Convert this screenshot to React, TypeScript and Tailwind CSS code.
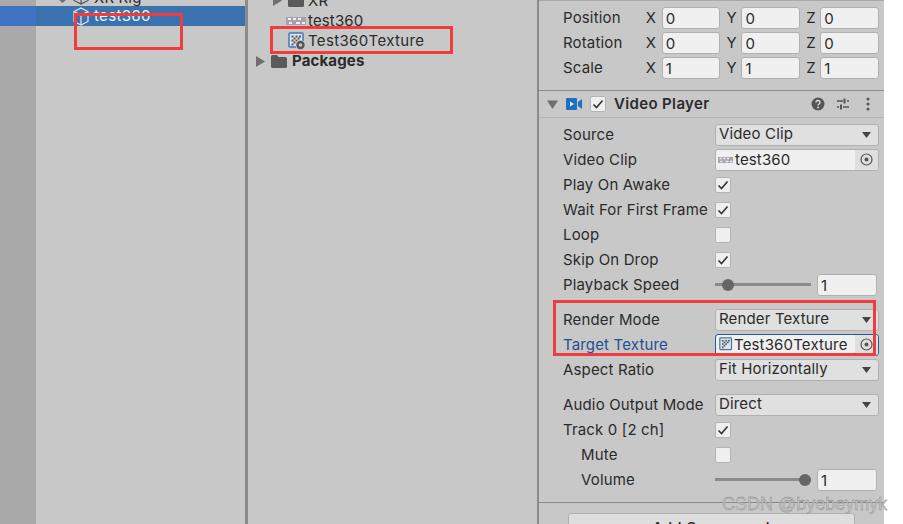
import { ReactNode } from 'react';

const GrayArrow = ({ down = false }: { down?: boolean }) => (
  <svg width="11" height="11" viewBox="0 0 11 11" className="shrink-0">
    {down ? <path d="M0 1.500h11L5.500 10z" fill="#6f6f6f" /> : <path d="M1 0l9 5.500L1 11z" fill="#6f6f6f" />}
  </svg>
);

const Folder = () => (
  <svg width="16" height="14" viewBox="0 0 16 14" className="shrink-0">
    <path d="M0 2.500Q0 1 1.500 1H6l1.500 2H14.500Q16 3 16 4.500V12.500Q16 14 14.500 14H1.500Q0 14 0 12.500z" fill="#5a5a5a" />
  </svg>
);

const Cube = ({ color }: { color: string }) => (
  <svg width="18" height="19" viewBox="0 0 18 19" fill="none" stroke={color} strokeWidth="1.200" className="shrink-0">
    <path d="M9 1l7 3.500v10L9 18l-7-3.500v-10z" />
    <path d="M2 4.500L9 8l7-3.500M9 8v10" />
  </svg>
);

const VideoThumb = ({ w = 20 }: { w?: number }) => (
  <svg width={w} height="8" viewBox="0 0 20 8" className="shrink-0">
    <rect width="20" height="8" fill="#a8a2b0" />
    <rect x="2" y="1" width="3" height="2" fill="#eee" />
    <rect x="7" y="1" width="3" height="2" fill="#eee" />
    <rect x="12" y="1" width="3" height="2" fill="#eee" />
    <rect x="3" y="5" width="3" height="2" fill="#eee" />
    <rect x="10" y="5" width="4" height="2" fill="#eee" />
    <rect x="16" y="5" width="3" height="2" fill="#eee" />
  </svg>
);

const TextureIcon = ({ size = 18, gear = true }: { size?: number; gear?: boolean }) => (
  <svg width={size} height={size} viewBox="0 0 18 18" className="shrink-0">
    <rect x="1" y="1" width="14" height="14" rx="1" fill="#dfe5ec" stroke="#3f78b0" strokeWidth="1.500" />
    <g fill="#555">
      <rect x="3.500" y="3.500" width="2" height="2" />
      <rect x="7.500" y="3.500" width="2" height="2" />
      <rect x="11" y="3.500" width="2" height="2" />
      <rect x="5.500" y="5.500" width="2" height="2" />
      <rect x="9.500" y="5.500" width="2" height="2" />
      <rect x="3.500" y="7.500" width="2" height="2" />
      <rect x="7.500" y="7.500" width="2" height="2" />
      <rect x="5.500" y="9.500" width="2" height="2" />
      <rect x="3.500" y="11.500" width="2" height="2" />
    </g>
    {gear && (
      <>
        <circle cx="12.500" cy="13" r="5" fill="#c8c8c8" />
        <circle cx="12.500" cy="13" r="3" fill="none" stroke="#555" strokeWidth="2.400" />
      </>
    )}
  </svg>
);

const Check = () => (
  <svg width="12" height="12" viewBox="0 0 12 12" fill="none" stroke="#333" strokeWidth="1.600">
    <path d="M1.500 6.500l3 3 6-7" />
  </svg>
);

const Checkbox = ({ checked = false }: { checked?: boolean }) => (
  <div className="w-4 h-4 rounded-[2px] bg-[#efefef] border border-[#b4b4b4] flex items-center justify-center">
    {checked && <Check />}
  </div>
);

const NumberField = ({ value, className }: { value: string; className: string }) => (
  <div className={`h-[22px] rounded-[3px] bg-[#f0f0f0] border border-[#b0b0b0] pl-[3px] flex items-center leading-none pt-[2px] ${className}`}>
    {value}
  </div>
);

const VectorRow = ({ label, value }: { label: string; value: string }) => (
  <div className="h-[25px] flex items-center pl-6 pr-[5px]">
    <div className="w-[83px]">{label}</div>
    <div className="w-[16px]">X</div>
    <NumberField value={value} className="w-[59px]" />
    <div className="w-[21px] pl-[6px]">Y</div>
    <NumberField value={value} className="w-[59px]" />
    <div className="w-[20px] pl-[6px]">Z</div>
    <NumberField value={value} className="w-[59px]" />
  </div>
);

const Dropdown = ({ value }: { value: string }) => (
  <div className="w-[164px] h-[22px] rounded-[3px] bg-[#e0e0e0] border border-[#b0b0b0] pl-[3px] pr-[7px] flex items-center justify-between">
    <span className="-mt-[2px]">{value}</span>
    <svg width="9" height="6" viewBox="0 0 9 6"><path d="M0 0h9L4.500 6z" fill="#444" /></svg>
  </div>
);

const ObjectField = ({ icon, value, focused = false }: { icon: ReactNode; value: string; focused?: boolean }) => (
  <div className={`w-[164px] h-[22px] rounded-[3px] bg-[#f0f0f0] border flex items-center justify-between ${focused ? 'border-[#2a5a9a]' : 'border-[#b0b0b0]'}`}>
    <div className="flex items-center pl-[2px]">
      {icon}
      <span>{value}</span>
    </div>
    <div className="w-[23px] h-full bg-[#dfdfdf] rounded-r-[3px] flex items-center justify-center">
      <svg width="13" height="13" viewBox="0 0 13 13" fill="none">
        <circle cx="6.500" cy="6.500" r="5.500" stroke="#555" strokeWidth="1.200" />
        <circle cx="6.500" cy="6.500" r="2" fill="#555" />
      </svg>
    </div>
  </div>
);

const Slider = ({ at, value }: { at: 'start' | 'end'; value: string }) => (
  <div className="flex items-center gap-[6px]">
    <div className={`w-[96px] h-[3px] bg-[#8a8a8a] flex items-center ${at === 'start' ? 'justify-start pl-[7px]' : 'justify-end'}`}>
      <div className="w-3 h-3 rounded-full bg-[#666666] shrink-0" />
    </div>
    <NumberField value={value} className="w-[60px]" />
  </div>
);

const Row = ({ label, children, indent = false, blue = false, mt = '' }: { label: string; children: ReactNode; indent?: boolean; blue?: boolean; mt?: string }) => (
  <div className={`h-[25px] flex items-center pr-[5px] ${indent ? 'pl-[42px]' : 'pl-6'} ${mt}`}>
    <div className={`whitespace-nowrap ${indent ? 'w-[134px]' : 'w-[152px]'} ${blue ? 'text-[#1f4f96]' : ''}`}>{label}</div>
    {children}
  </div>
);

export default function App() {
  return (
    <div className="relative w-[903px] h-[524px] overflow-hidden bg-white flex text-[#2b2b2b] text-[15px] tracking-[0.15px] leading-[20px] font-['Inter',sans-serif]">
      {/* hierarchy */}
      <div className="w-[36px] bg-[#a9a9a9] pt-[6px]">
        <div className="h-[20px] bg-[#3f74c4]" />
      </div>
      <div className="w-[209px] bg-[#c8c8c8]">
        <div className="h-[6px] flex items-end pl-[22px] gap-[4px]">
          <svg width="9" height="4" viewBox="0 0 9 4" className="shrink-0 mb-[3px]"><path d="M0 0h9L4.500 4z" fill="#6f6f6f" /></svg>
          <span className="ml-px mb-px"><Cube color="#555555" /></span>
          <span className="-mb-[2px] whitespace-nowrap">XR Rig</span>
        </div>
        <div className="h-[20px] bg-[#3a72b0] flex items-center pl-[36px] gap-[4px] text-[#f4f4f4]">
          <Cube color="#e8e8e8" />
          <span className="tracking-[0.35px]">test360</span>
        </div>
      </div>
      <div className="w-[3px] bg-[#8a8a8a]" />

      {/* project */}
      <div className="w-[289px] bg-[#c8c8c8]">
        <div className="h-[6px] flex items-end pl-6">
          <GrayArrow />
          <span className="ml-[5px] -mb-px"><Folder /></span>
          <span className="ml-[4px] -mb-[5px]">XR</span>
        </div>
        <div className="h-[20px] mt-[5px] flex items-center pl-[38px] gap-[2px]">
          <VideoThumb />
          <span>test360</span>
        </div>
        <div className="h-[20px] flex items-center pl-[40px] gap-[2px]">
          <TextureIcon />
          <span className="tracking-[0.35px]">Test360Texture</span>
        </div>
        <div className="h-[20px] flex items-center pl-[7px] gap-[5px] font-bold">
          <GrayArrow />
          <Folder />
          <span>Packages</span>
        </div>
      </div>
      <div className="w-[2px] bg-[#8a8a8a]" />

      {/* inspector */}
      <div className="w-[345px] bg-[#c8c8c8]">
        <div className="h-px bg-[#a8a8a8]" />
        <div className="pt-[4px]">
          <VectorRow label="Position" value="0" />
          <VectorRow label="Rotation" value="0" />
          <VectorRow label="Scale" value="1" />
        </div>
        <div className="mt-[10px] h-px bg-[#8a8a8a]" />
        <div className="h-[26px] flex items-center pl-[8px] pr-[14px]">
          <GrayArrow down />
          <svg width="16" height="12" viewBox="0 0 16 12" className="ml-[8px] shrink-0">
            <path d="M1 0h9q1 0 1 1v10q0 1-1 1H1q-1 0-1-1V1q0-1 1-1z" fill="#1f6fc0" />
            <path d="M12 4l4-3v10l-4-3z" fill="#1f6fc0" />
            <path d="M4 3.500l4 2.500-4 2.500z" fill="#e8edf2" />
          </svg>
          <div className="ml-[8px]"><Checkbox checked /></div>
          <span className="ml-[8px] font-semibold flex-1 tracking-[0.35px]">Video Player</span>
          <svg width="14" height="14" viewBox="0 0 14 14" className="shrink-0">
            <circle cx="7" cy="7" r="6.500" fill="#555" />
            <path d="M5 5.500q0-2 2-2t2 2q0 1-1 1.500T7 8.500" stroke="#ddd" strokeWidth="1.300" fill="none" />
            <circle cx="7" cy="10.500" r="0.900" fill="#ddd" />
          </svg>
          <svg width="14" height="12" viewBox="0 0 14 12" className="ml-[11px] shrink-0" stroke="#555" strokeWidth="1.600">
            <path d="M1 3h6M11 3h2M1 9h2M7 9h6" />
            <path d="M8.500 0.500v5M5 6.500v5" strokeWidth="2" />
          </svg>
          <svg width="4" height="14" viewBox="0 0 4 14" className="ml-[16px] shrink-0" fill="#555">
            <circle cx="2" cy="2" r="1.500" />
            <circle cx="2" cy="7" r="1.500" />
            <circle cx="2" cy="12" r="1.500" />
          </svg>
        </div>
        <div className="h-px bg-[#b4b4b4]" />
        <div className="pt-[4px]">
          <Row label="Source"><Dropdown value="Video Clip" /></Row>
          <Row label="Video Clip">
            <ObjectField icon={<span className="mr-[2px] flex"><VideoThumb w={15} /></span>} value="test360" />
          </Row>
          <Row label="Play On Awake"><Checkbox checked /></Row>
          <Row label="Wait For First Frame"><Checkbox checked /></Row>
          <Row label="Loop"><Checkbox /></Row>
          <Row label="Skip On Drop"><Checkbox checked /></Row>
          <Row label="Playback Speed"><Slider at="start" value="1" /></Row>
          <Row label="Render Mode" mt="mt-[10px]"><Dropdown value="Render Texture" /></Row>
          <Row label="Target Texture" blue>
            <ObjectField icon={<span className="ml-px flex"><TextureIcon size={15} gear={false} /></span>} value="Test360Texture" focused />
          </Row>
          <Row label="Aspect Ratio"><Dropdown value="Fit Horizontally" /></Row>
          <Row label="Audio Output Mode" mt="mt-[10px]"><Dropdown value="Direct" /></Row>
          <Row label="Track 0 [2 ch]"><Checkbox checked /></Row>
          <Row label="Mute" indent><Checkbox /></Row>
          <Row label="Volume" indent><Slider at="end" value="1" /></Row>
        </div>
        <div className="mt-[10px] h-px bg-[#8a8a8a]" />
        <div className="mt-[10px] mx-[29px] h-[30px] rounded-[3px] bg-[#dedede] border border-[#b0b0b0] flex items-center justify-center font-medium">
          Add Component
        </div>
      </div>

      {/* annotation boxes */}
      <div className="absolute left-[74px] top-[13px] w-[109px] h-[37px] border-[3px] border-[#f03c3c]" />
      <div className="absolute left-[270px] top-[26px] w-[183px] h-[28px] border-[3px] border-[#f03c3c]" />
      <div className="absolute left-[553px] top-[300px] w-[323px] h-[56px] border-[3px] border-[#f03c3c]" />

      {/* watermark */}
      <div className="absolute left-[722px] top-[492px] text-[18px] tracking-normal text-[#c4c4c4] [-webkit-text-stroke:0.3px_#7a7a7a] font-['Liberation_Sans',sans-serif] leading-[24px]">
        CSDN @byebeymyk
      </div>
    </div>
  );
}
